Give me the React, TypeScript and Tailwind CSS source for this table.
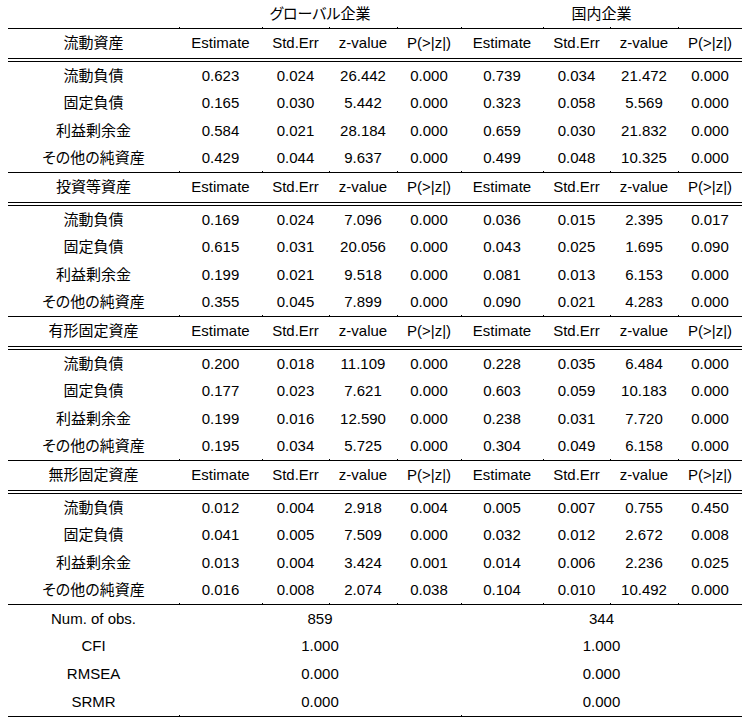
import React from "react";

const cols = "grid grid-cols-[171px_83px_67px_68px_64px_82px_67px_68px_64px]";

type Row = [string, ...string[]];

const sections: { title: string; rows: Row[] }[] = [
  {
    title: "流動資産",
    rows: [
      ["流動負債", "0.623", "0.024", "26.442", "0.000", "0.739", "0.034", "21.472", "0.000"],
      ["固定負債", "0.165", "0.030", "5.442", "0.000", "0.323", "0.058", "5.569", "0.000"],
      ["利益剰余金", "0.584", "0.021", "28.184", "0.000", "0.659", "0.030", "21.832", "0.000"],
      ["その他の純資産", "0.429", "0.044", "9.637", "0.000", "0.499", "0.048", "10.325", "0.000"],
    ],
  },
  {
    title: "投資等資産",
    rows: [
      ["流動負債", "0.169", "0.024", "7.096", "0.000", "0.036", "0.015", "2.395", "0.017"],
      ["固定負債", "0.615", "0.031", "20.056", "0.000", "0.043", "0.025", "1.695", "0.090"],
      ["利益剰余金", "0.199", "0.021", "9.518", "0.000", "0.081", "0.013", "6.153", "0.000"],
      ["その他の純資産", "0.355", "0.045", "7.899", "0.000", "0.090", "0.021", "4.283", "0.000"],
    ],
  },
  {
    title: "有形固定資産",
    rows: [
      ["流動負債", "0.200", "0.018", "11.109", "0.000", "0.228", "0.035", "6.484", "0.000"],
      ["固定負債", "0.177", "0.023", "7.621", "0.000", "0.603", "0.059", "10.183", "0.000"],
      ["利益剰余金", "0.199", "0.016", "12.590", "0.000", "0.238", "0.031", "7.720", "0.000"],
      ["その他の純資産", "0.195", "0.034", "5.725", "0.000", "0.304", "0.049", "6.158", "0.000"],
    ],
  },
  {
    title: "無形固定資産",
    rows: [
      ["流動負債", "0.012", "0.004", "2.918", "0.004", "0.005", "0.007", "0.755", "0.450"],
      ["固定負債", "0.041", "0.005", "7.509", "0.000", "0.032", "0.012", "2.672", "0.008"],
      ["利益剰余金", "0.013", "0.004", "3.424", "0.001", "0.014", "0.006", "2.236", "0.025"],
      ["その他の純資産", "0.016", "0.008", "2.074", "0.038", "0.104", "0.010", "10.492", "0.000"],
    ],
  },
];

const headers = ["Estimate", "Std.Err", "z-value", "P(>|z|)"];

const footer: [string, string, string][] = [
  ["Num. of obs.", "859", "344"],
  ["CFI", "1.000", "1.000"],
  ["RMSEA", "0.000", "0.000"],
  ["SRMR", "0.000", "0.000"],
];

// horizontal rule with the small column ticks Word leaves behind
function Rule({ ticks }: { ticks: number[] }) {
  return (
    <div className={`${cols} h-px bg-black`}>
      {Array.from({ length: 9 }).map((_, i) => (
        <div key={i} className="h-px">
          {ticks.includes(i) && <div className="w-px h-[2px] -mt-px bg-black" />}
        </div>
      ))}
    </div>
  );
}

const allTicks = [1, 2, 3, 4, 5, 6, 7, 8];

export default function App() {
  return (
    <div className="w-[749px] h-[728px] bg-white text-black text-[15px] font-['Liberation_Sans','Noto_Sans_CJK_JP',sans-serif] [font-feature-settings:'palt']">
      <div className="w-[734px] ml-[8px]">
        {/* group header */}
        <div className={`${cols} h-7 items-center text-center`}>
          <div />
          <div className="col-span-4">グローバル企業</div>
          <div className="col-span-4">国内企業</div>
        </div>

        {sections.map((s) => (
          <div key={s.title}>
            <Rule ticks={allTicks} />
            <div className={`${cols} h-[29px] items-center text-center`}>
              <div>{s.title}</div>
              {[...headers, ...headers].map((h, i) => (
                <div key={i}>{h}</div>
              ))}
            </div>
            <div className="h-[4px] border-y border-black" />
            {s.rows.map((r) => (
              <div key={r[0]} className={`${cols} h-[27.5px] items-center text-center`}>
                {r.map((c, i) => (
                  <div key={i}>{c}</div>
                ))}
              </div>
            ))}
          </div>
        ))}

        <Rule ticks={allTicks} />
        {footer.map(([label, a, b]) => (
          <div key={label} className={`${cols} h-[27.75px] items-center text-center`}>
            <div>{label}</div>
            <div className="col-span-4">{a}</div>
            <div className="col-span-4">{b}</div>
          </div>
        ))}
        <Rule ticks={[1, 5]} />
      </div>
    </div>
  );
}
